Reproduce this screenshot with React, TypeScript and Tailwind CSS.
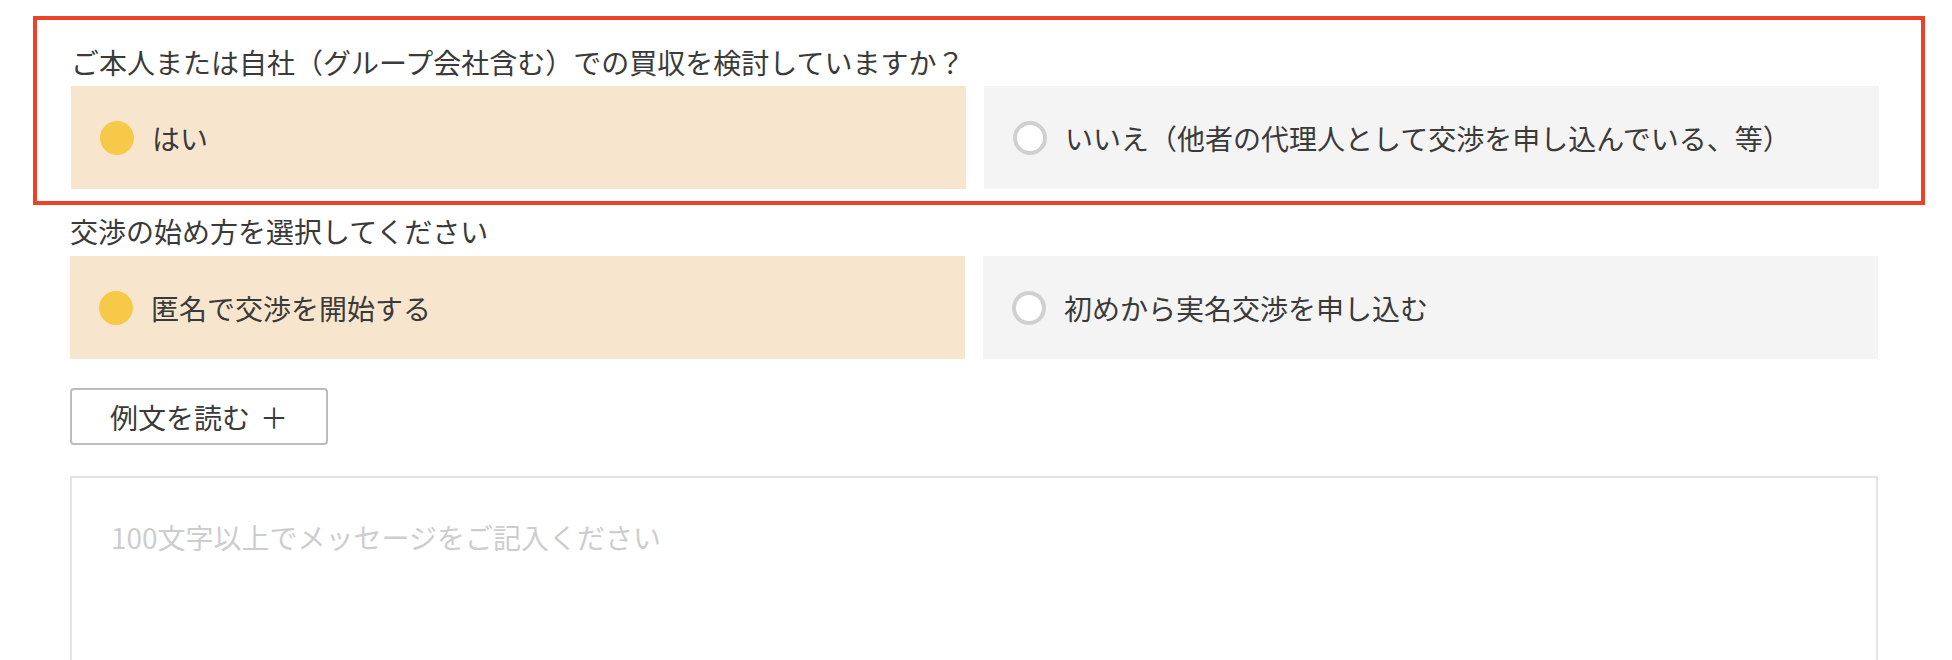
import { useState } from 'react';

type Option = { value: string; label: string };

function RadioRow({
  options,
  value,
  onChange,
}: {
  options: Option[];
  value: string;
  onChange: (v: string) => void;
}) {
  return (
    <div className="flex gap-[18px]">
      {options.map((opt) => {
        const checked = opt.value === value;
        return (
          <button
            key={opt.value}
            type="button"
            onClick={() => onChange(opt.value)}
            className={`flex h-[103px] flex-1 items-center gap-[18px] pl-[29px] text-left ${
              checked ? 'bg-[#f7e6cd]' : 'bg-[#f4f4f4]'
            }`}
          >
            {checked ? (
              <span className="h-[34px] w-[34px] shrink-0 rounded-full bg-[#f7c948]" />
            ) : (
              <span className="h-[34px] w-[34px] shrink-0 rounded-full border-[4px] border-[#d0d0d0] bg-white" />
            )}
            <span className="text-[28px] leading-[40px] text-[#3a3a3a]">{opt.label}</span>
          </button>
        );
      })}
    </div>
  );
}

export default function App() {
  const [self, setSelf] = useState('yes');
  const [start, setStart] = useState('anon');

  return (
    <div className="h-[660px] overflow-hidden bg-white pt-[16px] pl-[33px] text-[#3a3a3a] [font-family:'Noto_Sans_CJK_JP','Noto_Sans',sans-serif]">
      <div className="w-[1892px] border-[4px] border-[#ea4328] pt-[22px] pr-[42px] pb-[12px] pl-[34px]">
        <p className="mb-[4px] text-[28px] leading-[40px]">
          ご本人または自社（グループ会社含む）での買収を検討していますか？
        </p>
        <RadioRow
          value={self}
          onChange={setSelf}
          options={[
            { value: 'yes', label: 'はい' },
            { value: 'no', label: 'いいえ（他者の代理人として交渉を申し込んでいる、等）' },
          ]}
        />
      </div>

      <div className="w-[1845px] pl-[37px]">
        <p className="mt-[6px] mb-[5px] text-[28px] leading-[40px]">交渉の始め方を選択してください</p>
        <RadioRow
          value={start}
          onChange={setStart}
          options={[
            { value: 'anon', label: '匿名で交渉を開始する' },
            { value: 'real', label: '初めから実名交渉を申し込む' },
          ]}
        />

        <button
          type="button"
          className="mt-[29px] flex h-[57px] w-[258px] items-center justify-center gap-[10px] rounded-[4px] border-2 border-[#bcbcbc] bg-white text-[28px] leading-[40px] text-[#3a3a3a]"
        >
          <span>例文を読む</span>
          <span>＋</span>
        </button>

        <textarea
          placeholder="100文字以上でメッセージをご記入ください"
          className="mt-[31px] block h-[320px] w-full resize-none border-2 border-[#e3e3e3] bg-white px-[39px] pt-[39px] text-[28px] leading-[40px] text-[#3a3a3a] outline-none placeholder:text-[#cdcdcd]"
        />
      </div>
    </div>
  );
}
